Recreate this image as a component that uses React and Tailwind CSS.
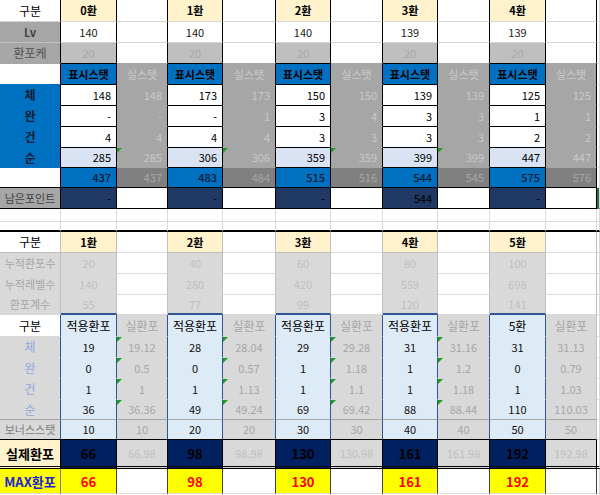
import React from "react";

const BASE =
  "p-0 px-[4px] border-r border-b whitespace-nowrap overflow-hidden leading-none align-middle relative";

const top = [
  { h: "0환", lv: 140, hp: 20, st: [[148, 148], ["-", "-"], [4, 4], [285, 285]], tot: [437, 437], rem: "-" },
  { h: "1환", lv: 140, hp: 20, st: [[173, 173], ["-", 1], [4, 4], [306, 306]], tot: [483, 484], rem: "-" },
  { h: "2환", lv: 140, hp: 20, st: [[150, 150], [3, 4], [3, 3], [359, 359]], tot: [515, 516], rem: "-" },
  { h: "3환", lv: 139, hp: 20, st: [[139, 139], [3, 3], [3, 3], [399, 399]], tot: [544, 545], rem: 544 },
  { h: "4환", lv: 139, hp: 20, st: [[125, 125], [1, 1], [2, 2], [447, 447]], tot: [575, 576], rem: "-" },
];

const bottom = [
  { h: "1환", a: 20, b: 140, c: 55, hdr: "적용환포", v: [19, 0, 1, 36], s: ["19.12", "0.5", "1", "36.36"], bonus: 10, real: 66, realS: "66.98" },
  { h: "2환", a: 40, b: 280, c: 77, hdr: "적용환포", v: [28, 0, 1, 49], s: ["28.04", "0.57", "1.13", "49.24"], bonus: 20, real: 98, realS: "98.98" },
  { h: "3환", a: 60, b: 420, c: 99, hdr: "적용환포", v: [29, 1, 1, 69], s: ["29.28", "1.18", "1.1", "69.42"], bonus: 30, real: 130, realS: "130.98" },
  { h: "4환", a: 80, b: 559, c: 120, hdr: "적용환포", v: [31, 1, 1, 88], s: ["31.16", "1.2", "1.18", "88.44"], bonus: 40, real: 161, realS: "161.98" },
  { h: "5환", a: 100, b: 698, c: 141, hdr: "5환", v: [31, 0, 1, 110], s: ["31.13", "0.79", "1.03", "110.03"], bonus: 50, real: 192, realS: "192.98" },
];

const statNames = ["체", "완", "건", "순"];

function Tri() {
  return (
    <span className="absolute left-0 top-0 w-0 h-0 border-t-[5px] border-r-[5px] border-t-[#1e9e1e] border-r-transparent" />
  );
}

function Td({ c, children, tri }) {
  return (
    <td className={`${BASE} ${c}`}>
      {tri && <Tri />}
      {children}
    </td>
  );
}

const GRID = "bg-white border-r-[#dadada] border-b-[#dadada]";

export default function App() {
  return (
    <div className="w-[600px] h-[495px] overflow-hidden bg-white font-['Noto_Sans_CJK_KR','Noto_Sans',sans-serif] text-[11px] text-black">
      <table className="table-fixed border-separate border-spacing-0 w-[600px]">
        <colgroup>
          <col className="w-[61px]" />
          <col className="w-[56px]" />
          <col className="w-[51px]" />
          <col className="w-[55px]" />
          <col className="w-[53px]" />
          <col className="w-[55px]" />
          <col className="w-[52px]" />
          <col className="w-[55px]" />
          <col className="w-[52px]" />
          <col className="w-[56px]" />
          <col className="w-[51px]" />
          <col className="w-[3px]" />
        </colgroup>
        <tbody>
          {/* Row 1 header */}
          <tr className="h-[22px]">
            <Td c="bg-white text-center text-[12px] border-r-black border-b-[#d4d4d4]">구분</Td>
            {top.map((r, i) => (
              <React.Fragment key={i}>
                <Td c="bg-[#fff2cc] text-center font-bold border-r-black border-b-[#d4d4d4]">{r.h}</Td>
                <Td c="bg-white border-r-black border-b-[#d4d4d4]" />
              </React.Fragment>
            ))}
            <Td c={GRID} />
          </tr>
          {/* Lv */}
          <tr className="h-[21px]">
            <Td c="bg-[#a6a6a6] text-center font-bold text-[#404040] border-r-black border-b-[#bfbfbf]">Lv</Td>
            {top.map((r, i) => (
              <React.Fragment key={i}>
                <Td c="bg-white text-center text-[#222] border-r-black border-b-[#d4d4d4]">{r.lv}</Td>
                <Td c="bg-white border-r-black border-b-[#d4d4d4]" />
              </React.Fragment>
            ))}
            <Td c={GRID} />
          </tr>
          {/* 환포케 */}
          <tr className="h-[21px]">
            <Td c="bg-[#a6a6a6] text-center text-[12px] text-[#505050] border-r-black border-b-[#a6a6a6]">환포케</Td>
            {top.map((r, i) => (
              <React.Fragment key={i}>
                <Td c="bg-[#bfbfbf] text-center text-[#a8a8a8] border-r-black border-b-black">{r.hp}</Td>
                <Td c="bg-white border-r-black border-b-[#a6a6a6]" />
              </React.Fragment>
            ))}
            <Td c={GRID} />
          </tr>
          {/* 표시스탯 */}
          <tr className="h-[21px]">
            <Td c="bg-white border-r-black border-b-[#0070c0]" />
            {top.map((r, i) => (
              <React.Fragment key={i}>
                <Td c="bg-[#0070c0] text-center font-bold border-r-black border-b-black">표시스탯</Td>
                <Td c="bg-[#a6a6a6] text-center text-[#c9c9c9] border-r-black border-b-[#a6a6a6]">실스탯</Td>
              </React.Fragment>
            ))}
            <Td c={GRID} />
          </tr>
          {/* stats */}
          {statNames.map((n, si) => (
            <tr key={n} className={si === 3 ? "h-[20px]" : "h-[21px]"}>
              <Td c="bg-[#0070c0] text-center font-bold text-[12px] text-[#0d1b33] border-r-black border-b-[#0070c0]">{n}</Td>
              {top.map((r, i) => (
                <React.Fragment key={i}>
                  <Td c={`${si === 3 ? "bg-[#dae3f3]" : "bg-white"} text-right pr-[5px] border-r-black border-b-black`}>{r.st[si][0]}</Td>
                  <Td tri={si === 3 && i < 4} c="bg-[#a6a6a6] text-right pr-[5px] text-[#c9c9c9] border-r-black border-b-[#a6a6a6]">{r.st[si][1]}</Td>
                </React.Fragment>
              ))}
              <Td c={GRID} />
            </tr>
          ))}
          {/* total */}
          <tr className="h-[20px]">
            <Td c="bg-white border-r-black border-b-black" />
            {top.map((r, i) => (
              <React.Fragment key={i}>
                <Td c="bg-[#0070c0] text-right pr-[5px] font-medium text-[#0d1b33] border-r-black border-b-black">{r.tot[0]}</Td>
                <Td c="bg-[#808080] text-right pr-[5px] text-[#a6a6a6] border-r-black border-b-black">{r.tot[1]}</Td>
              </React.Fragment>
            ))}
            <Td c={GRID} />
          </tr>
          {/* 남은포인트 */}
          <tr className="h-[21px]">
            <Td c="bg-[#a6a6a6] text-center px-0 text-[#404040] border-r-black border-b-black">남은포인트</Td>
            {top.map((r, i) => (
              <React.Fragment key={i}>
                <Td c="bg-[#1f3864] text-right pr-[5px] text-black border-r-black border-b-black">{r.rem}</Td>
                <Td c="bg-white border-r-black border-b-black" />
              </React.Fragment>
            ))}
            <Td c="bg-white border-l-2 border-l-[#217346] border-r-[#dadada] border-b-[#217346]" />
          </tr>
          {/* spacers */}
          <tr className="h-[13px]">
            {Array.from({ length: 12 }).map((_, i) => (
              <Td key={i} c={GRID} />
            ))}
          </tr>
          <tr className="h-[10px]">
            {Array.from({ length: 12 }).map((_, i) => (
              <Td key={i} c="bg-white border-r-[#dadada] border-b-2 border-b-black" />
            ))}
          </tr>
          {/* second header */}
          <tr className="h-[21px]">
            <Td c="bg-white text-center text-[12px] border-r-[#bfbfbf] border-b-[#bfbfbf]">구분</Td>
            {bottom.map((r, i) => (
              <React.Fragment key={i}>
                <Td c="bg-[#fff2cc] text-center font-bold border-r-[#bfbfbf] border-b-[#bfbfbf]">{r.h}</Td>
                <Td c="bg-white border-r-[#bfbfbf] border-b-[#dadada]" />
              </React.Fragment>
            ))}
            <Td c={GRID} />
          </tr>
          {[
            ["누적환포수", "a"],
            ["누적레벨수", "b"],
            ["환포계수", "c"],
          ].map(([lbl, k], ri) => (
            <tr key={k} className={ri === 2 ? "h-[20px]" : "h-[21px]"}>
              <Td c="bg-[#d9d9d9] text-center px-0 text-[#a6a6a6] border-r-[#bfbfbf] border-b-[#d9d9d9]">{lbl}</Td>
              {bottom.map((r, i) => (
                <React.Fragment key={i}>
                  <Td c={`bg-[#d9d9d9] text-center text-[#bfbfbf] border-r-[#bfbfbf] ${ri === 2 ? "border-b-2 border-b-[#2f5597]" : "border-b-[#d9d9d9]"}`}>{r[k]}</Td>
                  <Td c="bg-white border-r-[#bfbfbf] border-b-[#dadada]" />
                </React.Fragment>
              ))}
              <Td c={GRID} />
            </tr>
          ))}
          {/* 구분 적용환포 */}
          <tr className="h-[22px]">
            <Td c="bg-white text-center text-[12px] border-r-[#2f5597] border-b-[#d9d9d9]">구분</Td>
            {bottom.map((r, i) => (
              <React.Fragment key={i}>
                <Td c="bg-[#ddebf7] text-center text-[12px] border-r-[#2f5597] border-b-[#ddebf7]">{r.hdr}</Td>
                <Td c={`bg-[#d9d9d9] text-center text-[12px] text-[#a6a6a6] border-b-[#d9d9d9] ${i < 4 ? "border-r-[#2f5597]" : "border-r-[#bfbfbf]"}`}>실환포</Td>
              </React.Fragment>
            ))}
            <Td c={GRID} />
          </tr>
          {statNames.map((n, si) => (
            <tr key={n} className={si === 3 ? "h-[20px]" : "h-[21px]"}>
              <Td c={`bg-[#d9d9d9] text-center text-[12px] text-[#8ea9db] border-r-[#2f5597] ${si === 3 ? "border-b-[#a6a6a6]" : "border-b-[#d9d9d9]"}`}>{n}</Td>
              {bottom.map((r, i) => (
                <React.Fragment key={i}>
                  <Td c={`bg-[#ddebf7] text-center text-[#111] border-r-[#2f5597] ${si === 3 ? "border-b-[#a6a6a6]" : "border-b-[#ddebf7]"}`}>{r.v[si]}</Td>
                  <Td tri={i < 4} c={`bg-[#d9d9d9] text-center text-[#a6a6a6] ${i < 4 ? "border-r-[#2f5597]" : "border-r-[#bfbfbf]"} ${si === 3 ? "border-b-[#a6a6a6]" : "border-b-[#d9d9d9]"}`}>{r.s[si]}</Td>
                </React.Fragment>
              ))}
              <Td c={GRID} />
            </tr>
          ))}
          {/* 보너스스탯 */}
          <tr className="h-[20px]">
            <Td c="bg-[#d9d9d9] text-center px-0 text-[#808080] border-r-[#2f5597] border-b-black">보너스스탯</Td>
            {bottom.map((r, i) => (
              <React.Fragment key={i}>
                <Td c="bg-[#ddebf7] text-center text-[#111] border-r-[#2f5597] border-b-black">{r.bonus}</Td>
                <Td c={`bg-[#d9d9d9] text-center text-[#a6a6a6] border-b-black ${i < 4 ? "border-r-[#2f5597]" : "border-r-[#bfbfbf]"}`}>{r.bonus}</Td>
              </React.Fragment>
            ))}
            <Td c={GRID} />
          </tr>
          {/* 실제환포 */}
          <tr className="h-[29px]">
            <Td c="bg-[#fff2cc] text-center px-0 font-bold text-[13px] border-r-black border-b-[3px] border-double border-b-black">실제환포</Td>
            {bottom.map((r, i) => (
              <React.Fragment key={i}>
                <Td c="bg-[#002060] text-center font-bold text-[13px] text-black border-r-black border-b-[3px] border-double border-b-black">{r.real}</Td>
                <Td c="bg-[#d9d9d9] text-center text-[#bfbfbf] border-r-black border-b-[3px] border-double border-b-black">{r.realS}</Td>
              </React.Fragment>
            ))}
            <Td c="bg-white border-r-[#dadada] border-b-[3px] border-double border-b-black" />
          </tr>
          {/* MAX환포 */}
          <tr className="h-[25px]">
            <Td c="bg-[#ffff00] text-center px-0 font-bold text-[13px] text-[#2323d6] border-r-[#7f7f7f] border-b-[#dadada]">MAX환포</Td>
            {bottom.map((r, i) => (
              <React.Fragment key={i}>
                <Td c="bg-[#ffff00] text-center font-bold text-[13px] text-[#ff0000] border-r-[#404040] border-b-[#dadada]">{r.real}</Td>
                <Td c="bg-white border-r-[#404040] border-b-[#dadada]" />
              </React.Fragment>
            ))}
            <Td c={GRID} />
          </tr>
          <tr className="h-[10px]">
            {Array.from({ length: 12 }).map((_, i) => (
              <Td key={i} c={GRID} />
            ))}
          </tr>
        </tbody>
      </table>
    </div>
  );
}
